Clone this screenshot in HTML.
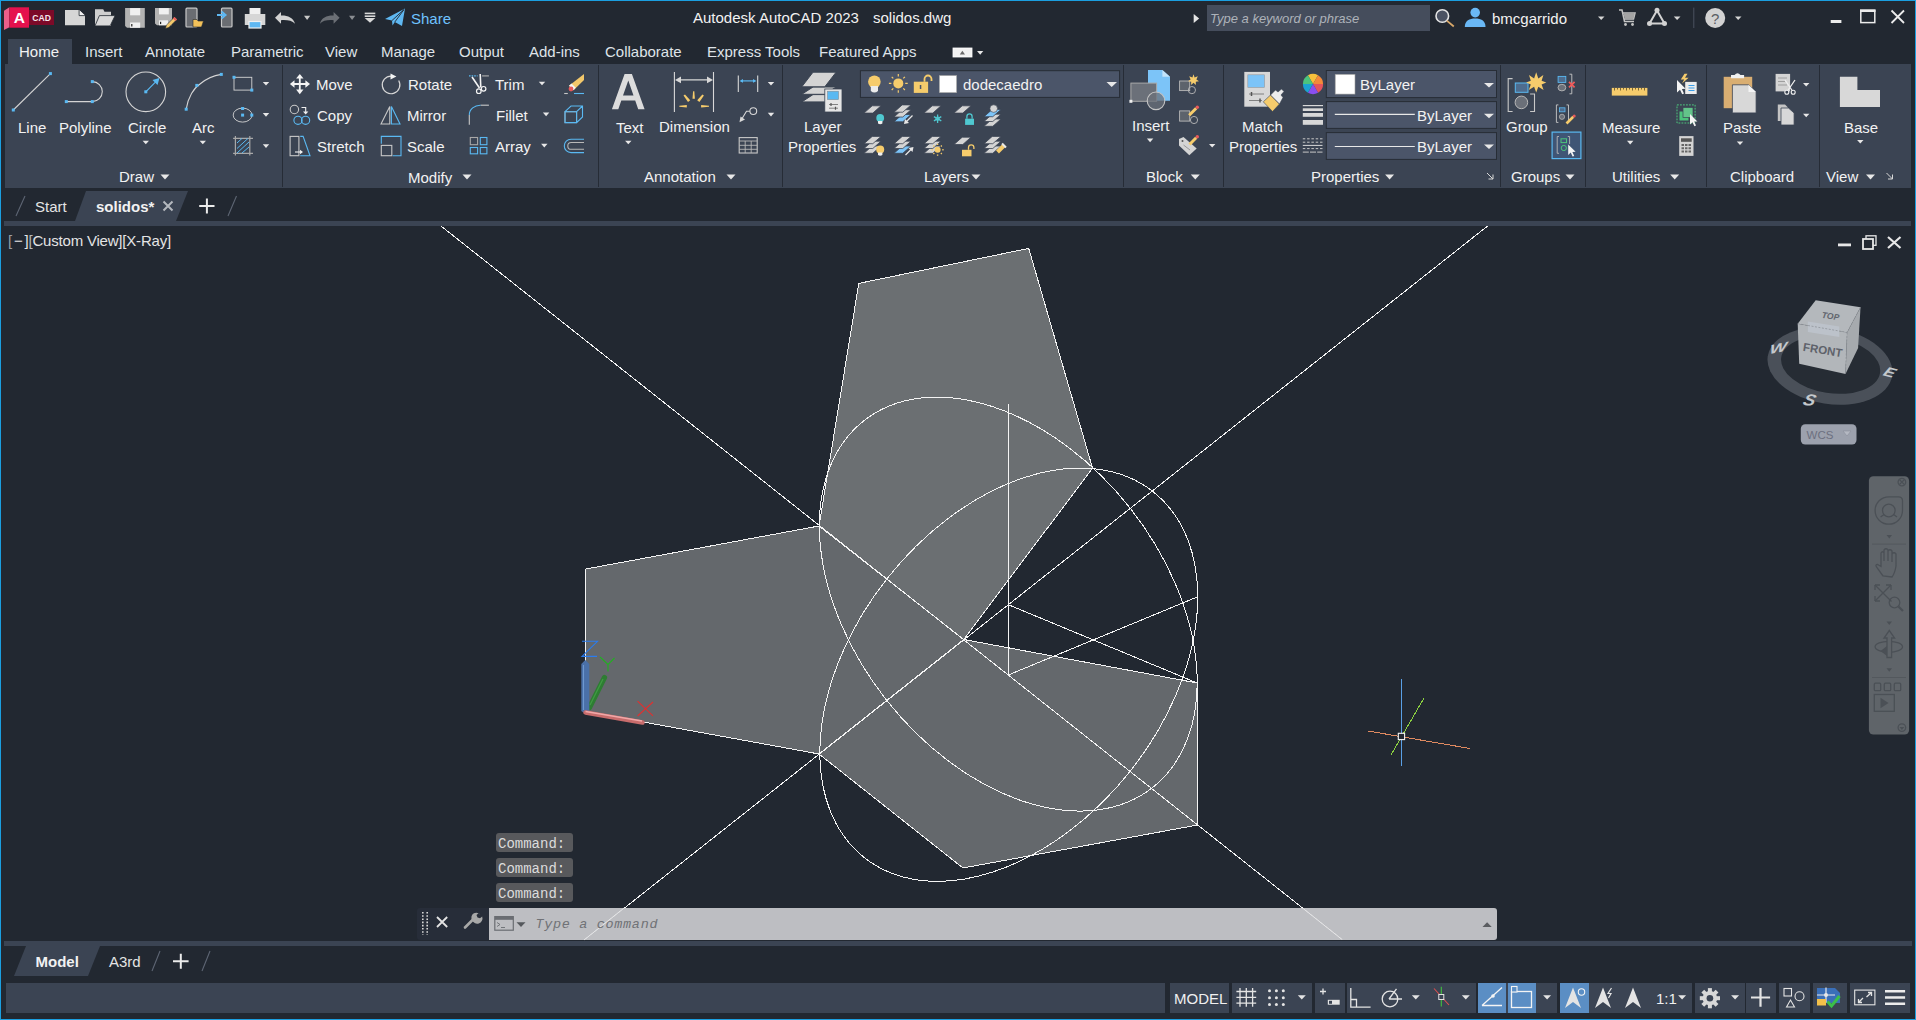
<!DOCTYPE html>
<html><head><meta charset="utf-8">
<style>
*{margin:0;padding:0;box-sizing:border-box}
html,body{width:1916px;height:1020px;overflow:hidden;background:#222831}
body{position:relative;font-family:"Liberation Sans",sans-serif;color:#f2f2f2}
.a{position:absolute}
.t{position:absolute;font-size:15px;line-height:15px;white-space:nowrap;color:#f2f2f2}
.p{position:absolute;background:#3b4453}
.sep{position:absolute;width:1px;background:#262c36;top:65px;height:122px}
.dd{position:absolute;width:0;height:0;border-left:4px solid transparent;border-right:4px solid transparent;border-top:5px solid #e6e6e6}
svg{position:absolute;overflow:visible}
</style></head><body>
<!-- window border -->
<div class="a" style="left:0;top:0;width:1916px;height:1020px;border:1px solid #1b9fe0;z-index:50;pointer-events:none"></div>

<!-- ============ TITLE BAR ============ -->
<div id="titlebar">
<svg width="1916" height="40" style="left:0;top:0">
<!-- logo -->
<polygon points="4,10.8 9.4,7.3 9.4,27.3 4,30" fill="#ec5f8a"/>
<rect x="9.4" y="7.3" width="19.6" height="20.4" fill="#e5114d"/>
<rect x="29" y="10" width="25" height="15" fill="#7c0a28"/>
<text x="19.3" y="23.2" font-family="Liberation Sans" font-weight="bold" font-size="15.5" fill="#fff" text-anchor="middle">A</text>
<text x="41.6" y="20.8" font-family="Liberation Sans" font-weight="bold" font-size="8.6" fill="#f4e8ec" text-anchor="middle">CAD</text>
<!-- new -->
<path d="M65,10 H79.1 L85,15.6 V25.3 H65 Z" fill="#d6d6d6"/>
<path d="M79.1,10 V15.6 H85 Z" fill="#f0f0f0"/>
<path d="M79.1,10 V15.6 H85" fill="none" stroke="#222831" stroke-width="0.8"/>
<!-- open -->
<path d="M95,9.3 H103.2 L104.5,11.8 H111 V25.9 H95 Z" fill="#cfcfcf"/>
<path d="M99.4,15.6 H115.1 L110.1,25.9 H95 Z" fill="#dadada" stroke="#222831" stroke-width="0.8"/>
<!-- save -->
<path d="M125.1,8.1 H144.8 V27.8 H127 L125.1,25.9 Z" fill="#b3b3b3"/>
<rect x="130.1" y="8.1" width="10.1" height="7.2" fill="#f0f0f0"/>
<rect x="130.1" y="22.5" width="10.1" height="5.3" fill="#f0f0f0"/>
<rect x="131.2" y="24" width="1.2" height="2.5" fill="#222"/>
<!-- save as -->
<path d="M155,8.1 H172 V25.3 H157 L155,23.5 Z" fill="#b3b3b3"/>
<rect x="159" y="8.1" width="9.8" height="6.3" fill="#f0f0f0"/>
<rect x="159" y="20.3" width="9" height="5" fill="#f0f0f0"/>
<rect x="160" y="21.8" width="1.2" height="2.3" fill="#222"/>
<path d="M174.5,17 L177,19.4 L168.8,27.6 L165.5,28.5 L166.3,25.2 Z" fill="#f3c86b" stroke="#222831" stroke-width="0.6"/>
<path d="M174.5,17 L177,19.4 L175.4,21 L172.9,18.6 Z" fill="#e85a5a"/>
<!-- open from mobile -->
<rect x="186" y="8.2" width="11" height="18.8" rx="1" fill="#6a6d72" stroke="#c8c8c8" stroke-width="1.2"/>
<path d="M193,19.5 H197 L198,21 H203.5 L201.5,27 H193 Z" fill="#f2c15a" stroke="#222831" stroke-width="0.6"/>
<!-- save to mobile -->
<rect x="221.5" y="8.2" width="10.5" height="18.8" rx="1" fill="#6a6d72" stroke="#c8c8c8" stroke-width="1.2"/>
<path d="M217,15 H225 M221.5,11.5 L225.5,15 L221.5,18.5" fill="none" stroke="#5fb8f2" stroke-width="2"/>
<!-- print -->
<rect x="249.5" y="8" width="11" height="6" fill="#f0f0f0"/>
<path d="M244.8,14 H265.3 V25 H244.8 Z" fill="#d6d6d6"/>
<rect x="249" y="21.5" width="12" height="6.5" fill="#5fb8f2" stroke="#f0f0f0" stroke-width="1.2"/>
<!-- undo -->
<path d="M275,17.8 L281,12 V15.6 C287,15.3 293.5,17.5 295,23.8 C292,20.5 287,19.8 281,20.2 V23.8 Z" fill="#d2d2d2"/>
<polygon points="304,15.8 310.2,15.8 307.1,20" fill="#c8c8c8"/>
<!-- redo -->
<path d="M339.6,17.8 L333.6,12 V15.6 C327.6,15.3 321.1,17.5 320,23.8 C322.6,20.5 327.6,19.8 333.6,20.2 V23.8 Z" fill="#6b6f75"/>
<polygon points="349,15.8 355.2,15.8 352.1,20" fill="#8a8d92"/>
<!-- customize -->
<rect x="364.7" y="12.6" width="10.6" height="1.6" fill="#d8d8d8"/>
<rect x="364.7" y="15.4" width="10.6" height="1.6" fill="#d8d8d8"/>
<polygon points="364.7,18 375.3,18 370,22.8" fill="#d8d8d8"/>
<!-- share -->
<path d="M385,19 L405,8.6 L402,26 L394.8,22 L392.5,25.5 L392,20.5 Z" fill="#5fb8f2"/>
<path d="M392,20.5 L404,9.5 M394.8,22 L404,9.5" stroke="#222831" stroke-width="0.9"/>
<!-- search -->
<polygon points="1193.7,14 1199.2,18.5 1193.7,23" fill="#e4e4e4"/>
<circle cx="1442.3" cy="16" r="6.3" fill="#4b5262" stroke="#e4e4e4" stroke-width="1.6"/>
<path d="M1446.8,20.6 L1453.8,26.5" stroke="#d9a86a" stroke-width="1.8"/>
<!-- user -->
<circle cx="1475.2" cy="12.6" r="4.8" fill="#6ab8f5"/>
<path d="M1464.8,27 C1464.8,20.5 1469.5,18.5 1475.2,18.5 C1481,18.5 1485.5,20.5 1485.5,27 Z" fill="#6ab8f5"/>
<polygon points="1598,16.5 1604.5,16.5 1601.2,20" fill="#d6d6d6"/>
<!-- cart -->
<path d="M1619,10 H1622 L1624.5,21.5 H1634 M1623,13 H1635 L1633.5,19 H1624" fill="none" stroke="#c4c4c4" stroke-width="1.5"/>
<path d="M1623.5,13.2 H1634.8 L1633.4,18.8 H1624.6 Z" fill="#a4a4a4"/>
<circle cx="1625.5" cy="24.5" r="1.4" fill="#c4c4c4"/><circle cx="1632.5" cy="24.5" r="1.4" fill="#c4c4c4"/>
<!-- A360 -->
<path d="M1657,10.5 L1649.5,23.5 H1664.5 Z" fill="none" stroke="#d2d2d2" stroke-width="2"/>
<circle cx="1657" cy="10.3" r="2.5" fill="#d2d2d2"/><circle cx="1649.5" cy="23.5" r="2.5" fill="#d2d2d2"/><circle cx="1664.5" cy="23.5" r="2.5" fill="#d2d2d2"/>
<polygon points="1673.8,16.5 1680.5,16.5 1677.1,20" fill="#d6d6d6"/>
<rect x="1693.3" y="7.6" width="1" height="20.4" fill="#4a5260"/>
<!-- help -->
<circle cx="1715.2" cy="18" r="10" fill="#d2d2d2"/>
<text x="1715.2" y="23.5" font-family="Liberation Sans" font-size="15" fill="#5a5e64" text-anchor="middle">?</text>
<polygon points="1735,16.5 1741.5,16.5 1738.2,20" fill="#d6d6d6"/>
<!-- window controls -->
<rect x="1830.7" y="20" width="10.7" height="3" fill="#ececec"/>
<rect x="1860.8" y="10.3" width="14" height="12.3" fill="none" stroke="#ececec" stroke-width="1.5"/>
<rect x="1860" y="9.5" width="15.5" height="2.5" fill="#ececec"/>
<path d="M1891.5,10.5 L1904,23 M1904,10.5 L1891.5,23" stroke="#ececec" stroke-width="1.8"/>
</svg>
<div class="t" style="left:693px;top:10px">Autodesk AutoCAD 2023</div>
<div class="t" style="left:873px;top:10px">solidos.dwg</div>
<div class="t" style="left:411px;top:11px;color:#6fc3ff">Share</div>
<div class="a" style="left:1207px;top:5px;width:223px;height:26px;background:#454d5c"></div>
<div class="t" style="left:1210px;top:11px;font-size:13px;font-style:italic;color:#aeb3ba">Type a keyword or phrase</div>
<div class="t" style="left:1492px;top:11px">bmcgarrido</div>
</div>

<!-- ============ RIBBON TABS ============ -->
<div class="p" style="left:8px;top:39px;width:64px;height:25px"></div>
<div class="t" style="left:19px;top:44px">Home</div>
<div class="t" style="left:85px;top:44px;color:#dfe3e8">Insert</div>
<div class="t" style="left:145px;top:44px;color:#dfe3e8">Annotate</div>
<div class="t" style="left:231px;top:44px;color:#dfe3e8">Parametric</div>
<div class="t" style="left:325px;top:44px;color:#dfe3e8">View</div>
<div class="t" style="left:381px;top:44px;color:#dfe3e8">Manage</div>
<div class="t" style="left:459px;top:44px;color:#dfe3e8">Output</div>
<div class="t" style="left:529px;top:44px;color:#dfe3e8">Add-ins</div>
<div class="t" style="left:605px;top:44px;color:#dfe3e8">Collaborate</div>
<div class="t" style="left:707px;top:44px;color:#dfe3e8">Express Tools</div>
<div class="t" style="left:819px;top:44px;color:#dfe3e8">Featured Apps</div>
<svg width="1000" height="64" style="left:0;top:0">
<rect x="953" y="48" width="19" height="9" fill="#f2f2f2" stroke="#ffffff" stroke-width="0.8"/>
<polygon points="959.8,54.5 965,54.5 962.4,50.8" fill="#6a6a6a"/>
<polygon points="977,51 983.3,51 980.2,54.7" fill="#e8e8e8"/>
</svg>

<!-- ============ RIBBON PANEL ============ -->
<div class="p" style="left:5px;top:64px;width:1906px;height:124px"></div>
<div id="ribbon">
<!-- separators -->
<div class="sep" style="left:282px"></div>
<div class="sep" style="left:598px"></div>
<div class="sep" style="left:782px"></div>
<div class="sep" style="left:1123px"></div>
<div class="sep" style="left:1223px"></div>
<div class="sep" style="left:1500px"></div>
<div class="sep" style="left:1585px"></div>
<div class="sep" style="left:1706px"></div>
<div class="sep" style="left:1819px"></div>
<svg width="1916" height="200" style="left:0;top:0">
<defs>
<g id="tri"><polygon points="-3.2,-1.8 3.2,-1.8 0,1.8" fill="#e8e8e8"/></g>
<g id="trib"><polygon points="-4.5,-2.5 4.5,-2.5 0,2.5" fill="#e8e8e8"/></g>
<rect id="bq" x="-1.5" y="-1.5" width="3" height="3" fill="#5ab9f2"/>
</defs>
<!-- ===== DRAW ===== -->
<g fill="none" stroke="#d4d4d4" stroke-width="1.1">
<line x1="13.3" y1="110" x2="50.4" y2="73.6"/>
<path d="M66.3,101.6 H92.3 A10,10 0 0 0 92.3,81.6"/>
<circle cx="145.8" cy="91.8" r="19.8"/>
<path d="M186.2,109.2 C188,97 194,88 200,84 C206,79 214,75.5 221.3,74.4"/>
<rect x="234" y="77.3" width="17.8" height="12.8" stroke-width="0.9"/>
<ellipse cx="242.6" cy="115.1" rx="9.4" ry="7" stroke-width="0.9"/>
<path d="M235.4,136.1 V155.5 M249.8,136.1 V155.5 M233.1,138.4 H253 M233.1,153.3 H253" stroke="#a8a8a8" stroke-width="1.2"/>
</g>
<path d="M145.8,91.8 L158.6,78.9" stroke="#5ab9f2" stroke-width="1.2"/>
<polygon points="159.5,78 152.5,80 157.5,85" fill="#5ab9f2"/>
<path d="M237,143 L242,138.4 M237,148.5 L248,138.4 M237,153 L249,142 M242,153 L249,147" stroke="#5ab9f2" stroke-width="1"/>
<use href="#bq" x="13.3" y="110"/><use href="#bq" x="50.4" y="73.6"/>
<use href="#bq" x="66.3" y="101.6"/><use href="#bq" x="92.3" y="101.6"/><use href="#bq" x="92.3" y="81.6"/>
<use href="#bq" x="145.8" y="91.8"/>
<use href="#bq" x="186.2" y="109.2"/><use href="#bq" x="196.8" y="85.4"/><use href="#bq" x="221.3" y="74.4"/>
<use href="#bq" x="234" y="77.3"/><use href="#bq" x="251.8" y="90.1"/>
<use href="#bq" x="242.6" y="108.5"/><use href="#bq" x="242.6" y="115.1"/><use href="#bq" x="251.8" y="115.1"/>
<use href="#tri" x="266" y="83.8"/><use href="#tri" x="266" y="114.9"/><use href="#tri" x="266" y="146.1"/>
<use href="#tri" x="145.8" y="142.5"/><use href="#tri" x="202.8" y="142.5"/>
<use href="#trib" x="165" y="177"/>
<!-- ===== MODIFY ===== -->
<g fill="#f4f4f4">
<path d="M291.5,84 H308.3 M299.8,75.5 V92.5" stroke="#f4f4f4" stroke-width="1.8"/>
<polygon points="289.9,84 294.5,80.3 294.5,87.7"/><polygon points="310,84 305.4,80.3 305.4,87.7"/>
<polygon points="299.8,73.9 296.1,78.5 303.5,78.5"/><polygon points="299.8,94.2 296.1,89.6 303.5,89.6"/>
</g>
<path d="M391.1,76.1 A8.8,8.8 0 1 0 398.7,80.5" fill="none" stroke="#d8d8d8" stroke-width="1.2"/>
<polygon points="390.5,73.4 396.4,76.4 390.5,79.4" fill="#f4f4f4"/>
<circle cx="294.4" cy="109.5" r="4.2" fill="none" stroke="#c8c8c8" stroke-width="1.1"/>
<path d="M301.5,107.5 H305.7 V112" fill="none" stroke="#f0f0f0" stroke-width="1.1"/>
<polygon points="303,111.5 308.4,111.5 305.7,114.6" fill="#f0f0f0"/>
<circle cx="298" cy="120.3" r="4.1" fill="none" stroke="#5ab9f2" stroke-width="1.1"/>
<circle cx="305.6" cy="120.3" r="4.1" fill="none" stroke="#5ab9f2" stroke-width="1.1"/>
<path d="M381,124 L389.8,106.4 V124 Z" fill="none" stroke="#c8c8c8" stroke-width="1.1"/>
<path d="M391.4,106.4 L400,124 H391.4 Z" fill="none" stroke="#5ab9f2" stroke-width="1.1"/>
<rect x="290.1" y="136.4" width="8.8" height="19.3" fill="none" stroke="#c8c8c8" stroke-width="1.1"/>
<path d="M300.2,136.4 H303.1 L310,155.7 H300.2" fill="none" stroke="#5ab9f2" stroke-width="1.1"/>
<path d="M295,152 H301.5" stroke="#f0f0f0" stroke-width="1.1"/><polygon points="303,152 300,149.8 300,154.2" fill="#f0f0f0"/>
<path d="M381.3,143.8 V136.4 H401 V155.7 H392.7" fill="none" stroke="#5ab9f2" stroke-width="1.1"/>
<rect x="381.3" y="145.4" width="10.5" height="10.3" fill="none" stroke="#c8c8c8" stroke-width="1.1"/>
<!-- trim -->
<path d="M469,75.9 H477.6" stroke="#5ab9f2" stroke-width="1.2" stroke-dasharray="1.6,1"/>
<path d="M482.1,75.9 H488.9" stroke="#a8a8a8" stroke-width="1.2"/>
<path d="M472,77 L479.5,88 M480.2,74 L480.8,87.5" stroke="#f4f4f4" stroke-width="1.6"/>
<circle cx="478.8" cy="91.2" r="2.3" fill="none" stroke="#f4f4f4" stroke-width="1.2"/>
<circle cx="483.6" cy="88.8" r="2.3" fill="none" stroke="#f4f4f4" stroke-width="1.2"/>
<use href="#tri" x="542" y="83.5"/>
<path d="M584,73.9 V80 L573.5,90.3 L569,85.8 Z" fill="#f3c86b"/>
<path d="M571.5,83.5 L575.8,87.8 L573.5,90.3 L569,85.8 Z" fill="#f4f4f4"/>
<circle cx="571" cy="89" r="2.4" fill="#e85a5a"/>
<path d="M564.2,93.5 H567.8" stroke="#c8c8c8" stroke-width="1.1"/><path d="M574,93.5 H584" stroke="#5ab9f2" stroke-width="1.1"/>
<!-- fillet -->
<path d="M469.3,114.9 V124.8" stroke="#c8c8c8" stroke-width="1.1"/>
<path d="M469.3,114.9 A11,9.7 0 0 1 480.7,105.2" fill="none" stroke="#5ab9f2" stroke-width="1.1"/>
<path d="M480.7,105.2 H488.9" stroke="#c8c8c8" stroke-width="1.1"/>
<use href="#tri" x="546.1" y="114.4"/>
<rect x="565" y="111.7" width="11.6" height="10.9" fill="none" stroke="#a8a8a8" stroke-width="1.1"/>
<path d="M565,111.7 L571,106 H582.5 V117 L576.6,122.6 H565 Z M576.6,111.7 L582.5,106 M565,111.7 H576.6 V122.6" fill="none" stroke="#5ab9f2" stroke-width="1.1"/>
<!-- array -->
<rect x="470.3" y="137.5" width="7.3" height="7.2" fill="none" stroke="#a8a8a8" stroke-width="1.1"/>
<rect x="480.3" y="137.5" width="6.6" height="7.2" fill="none" stroke="#5ab9f2" stroke-width="1.1"/>
<rect x="470.3" y="147.5" width="7.3" height="6.3" fill="none" stroke="#5ab9f2" stroke-width="1.1"/>
<rect x="480.3" y="147.5" width="6.6" height="6.3" fill="none" stroke="#5ab9f2" stroke-width="1.1"/>
<use href="#tri" x="544.3" y="145.6"/>
<path d="M584,139.2 H571 A6.7,6.7 0 0 0 571,152.6 H584" fill="none" stroke="#5ab9f2" stroke-width="1.1"/>
<path d="M584,142.5 H571.2 A3.4,3.4 0 0 0 571.2,149.3 H584" fill="none" stroke="#b8b8b8" stroke-width="1.1"/>
<use href="#trib" x="467" y="177"/>
<!-- ===== ANNOTATION ===== -->
<path d="M611.9,109.3 L624.6,73.9 H631.9 L644.6,109.3 H638.2 L635.2,100.6 H621.3 L618.3,109.3 Z M623,95.5 H633.5 L628.3,80.5 Z" fill="#dcdcdc" fill-rule="evenodd"/>
<use href="#tri" x="628.3" y="142.5"/>
<path d="M674.4,72 V112.1 M713.5,72 V112.1 M677,79.9 H711" stroke="#d8d8d8" stroke-width="1.1"/>
<polygon points="675,79.9 681,76.6 681,83.2" fill="#d8d8d8"/><polygon points="713,79.9 707,76.6 707,83.2" fill="#d8d8d8"/>
<g fill="#f6cc6c">
<polygon points="692.5,98.8 694.9,98.8 694.3,91.2 693.1,91.2"/>
<polygon points="688,102 690.2,100.2 685,94.5 683.5,95.5"/>
<polygon points="699.4,102 697.2,100.2 702.4,94.5 703.9,95.5"/>
<polygon points="686.8,105 686.8,107.6 679.3,106.8 679.3,105.8"/>
<polygon points="701.1,105 701.1,107.6 709,106.8 709,105.8"/>
</g>
<path d="M738.3,75.4 V92 M757.7,75.4 V92" stroke="#d8d8d8" stroke-width="1.1"/>
<path d="M741,80.9 H755" stroke="#5ab9f2" stroke-width="1.2"/>
<polygon points="739.5,80.9 743,79 743,82.8" fill="#5ab9f2"/><polygon points="756.5,80.9 753,79 753,82.8" fill="#5ab9f2"/>
<use href="#tri" x="771" y="83.8"/>
<circle cx="753.3" cy="111.1" r="3.4" fill="none" stroke="#d8d8d8" stroke-width="1.1"/>
<path d="M749.9,111.3 H746.5 L741.5,119.5" fill="none" stroke="#d8d8d8" stroke-width="1.1"/>
<polygon points="739.5,122.2 740.5,116.5 745,119.5" fill="#d8d8d8"/>
<use href="#tri" x="771" y="114.6"/>
<rect x="739.2" y="137.6" width="18" height="15.4" fill="none" stroke="#c8c8c8" stroke-width="1.1"/>
<path d="M739.2,141 H757.2 M739.2,145.3 H757.2 M739.2,149.3 H757.2 M745.2,141 V153 M751.2,141 V153" stroke="#b8b8b8" stroke-width="0.9"/>
<use href="#trib" x="731" y="177"/>
<!-- ===== LAYERS ===== -->
<g fill="#d4d4d4" stroke="#3b4453" stroke-width="1">
<path d="M801.8,101.9 L813,94.6 H836.1 L824.8,101.9 Z"/>
<path d="M801.8,94.3 L813,87 H836.1 L824.8,94.3 Z"/>
<path d="M801.8,86.8 L813,72.2 H836.1 L824.8,86.8 Z"/>
</g>
<rect x="824.8" y="89" width="17.2" height="23" fill="#e6e6e6" stroke="#3b4453" stroke-width="0.8"/>
<rect x="827.4" y="91.2" width="11.2" height="8.5" fill="#5ab9f2" stroke="#888" stroke-width="0.5"/>
<path d="M829,104.5 H838 M829,108.2 H838" stroke="#777" stroke-width="0.9"/>
<path d="M831,103 V106 M835.5,106.7 V109.7" stroke="#555" stroke-width="1.2"/>
<rect x="860.4" y="70.7" width="259.2" height="26.7" fill="#4b5569" stroke="#272d36" stroke-width="1"/>
<circle cx="874.4" cy="81.7" r="6.3" fill="#f6cc6c"/>
<path d="M870.8,86 H878 V91 Q874.4,94 870.8,91 Z" fill="#ececec"/>
<circle cx="898.3" cy="83.4" r="5" fill="#f6cc6c"/>
<path d="M898.3,74 V76.5 M898.3,90.3 V92.8 M888.9,83.4 H891.4 M905.2,83.4 H907.7 M891.7,76.8 L893.3,78.4 M903.3,88.4 L904.9,90 M904.9,76.8 L903.3,78.4 M893.3,88.4 L891.7,90" stroke="#f6cc6c" stroke-width="1.2"/>
<rect x="913.8" y="81.7" width="14.3" height="11.2" fill="#f6cc6c"/>
<rect x="919.8" y="85" width="1.5" height="4" fill="#4b5569"/>
<path d="M924.5,81.7 V79 A3.5,3.5 0 0 1 931.5,79 V81" fill="none" stroke="#f6cc6c" stroke-width="1.8"/>
<rect x="939.3" y="75.5" width="17.4" height="17.2" fill="#ffffff" stroke="#9a9a9a" stroke-width="0.6"/>
<polygon points="1106.5,82 1117,82 1111.7,87" fill="#e8e8e8"/>
<defs>
<path id="para" d="M0,7.3 L8.2,0 H17 L8.8,7.3 Z"/>
<g id="stk"><use href="#para" y="9.6" fill="#d4d4d4"/><use href="#para" y="4.8"/><use href="#para" y="0"/></g>
</defs>
<g stroke="#3b4453" stroke-width="0.8" fill="#d4d4d4">
<!-- row1 -->
<use href="#para" x="864" y="105.8"/>
<use href="#para" x="894" y="114.5" fill="#7cc4f8"/><use href="#para" x="894" y="109.7"/><use href="#para" x="894" y="104.9"/>
<use href="#para" x="924" y="105.8"/>
<use href="#para" x="954" y="105.8"/>
<use href="#para" x="984" y="119"/><use href="#para" x="984" y="114.2"/><use href="#para" x="984" y="109.4" fill="#7cc4f8"/>
<!-- row2 -->
<use href="#para" x="864" y="146"/><use href="#para" x="864" y="141.2"/><use href="#para" x="864" y="136.4"/>
<use href="#para" x="894" y="146" fill="#7cc4f8"/><use href="#para" x="894" y="141.2"/><use href="#para" x="894" y="136.4"/>
<use href="#para" x="924" y="146"/><use href="#para" x="924" y="141.2"/><use href="#para" x="924" y="136.4"/>
<use href="#para" x="954" y="137.2"/>
<use href="#para" x="984" y="146"/><use href="#para" x="984" y="141.2"/><use href="#para" x="984" y="136.4"/>
</g>
<circle cx="880.2" cy="118" r="3.9" fill="#4fc8d0"/><path d="M878,121 H882.4 V123.5 Q880.2,125 878,123.5 Z" fill="#eee"/>
<path d="M912.5,115.5 L905.5,122.5" stroke="#e8e8e8" stroke-width="1.2"/><polygon points="904,124 905,119 909,123" fill="#e8e8e8"/>
<path d="M937.6,114.5 V123 M933.9,116.6 L941.3,120.9 M941.3,116.6 L933.9,120.9" stroke="#4fc8d0" stroke-width="1.3"/>
<circle cx="937.6" cy="118.7" r="1.8" fill="none" stroke="#4fc8d0" stroke-width="0.8"/>
<rect x="965.1" y="118.7" width="8.9" height="6.2" fill="#4fc8d0"/>
<path d="M966.9,118.7 V116.5 A2.6,2.6 0 0 1 972.1,116.5 V118.7" fill="none" stroke="#4fc8d0" stroke-width="1.3"/>
<circle cx="993.7" cy="108.6" r="3.8" fill="#d4d4d4" stroke="#3b4453" stroke-width="0.6"/>
<circle cx="880.2" cy="149.5" r="4" fill="#f6cc6c"/><path d="M878,152.5 H882.4 V155 Q880.2,156.5 878,155 Z" fill="#eee"/>
<path d="M905.5,155 L912,148.5" stroke="#e8e8e8" stroke-width="1.2"/><polygon points="913.5,147 912.5,152 908.5,148" fill="#e8e8e8"/>
<circle cx="937.6" cy="149.7" r="3" fill="#f6cc6c"/>
<path d="M937.6,143.7 V145 M937.6,154.4 V155.7 M931.6,149.7 H932.9 M942.3,149.7 H943.6 M933.4,145.5 L934.3,146.4 M940.9,153 L941.8,153.9 M941.8,145.5 L940.9,146.4 M934.3,153 L933.4,153.9" stroke="#f6cc6c" stroke-width="1.4"/>
<rect x="962" y="149.8" width="9.5" height="6.5" fill="#f6cc6c"/>
<path d="M968.5,149.8 V147.5 A2.7,2.7 0 0 1 973.9,147.5 V149" fill="none" stroke="#f6cc6c" stroke-width="1.3"/>
<path d="M997.5,152 L1004.5,145" stroke="#f6cc6c" stroke-width="4"/>
<path d="M1002,143.5 L1006,147.5" stroke="#e8e8e8" stroke-width="2"/>
<use href="#trib" x="976" y="177"/>
<!-- ===== BLOCK ===== -->
<path d="M1148,70.1 H1162.4 L1170,76.7 V100.8 H1148 Z" fill="#7cc4f8"/>
<path d="M1162.4,70.1 V76.7 H1170 Z" fill="#c4e4fb"/>
<rect x="1130.9" y="83.1" width="25.7" height="18.2" fill="#6b7079" stroke="#a8a8a8" stroke-width="1"/>
<circle cx="1156" cy="100.8" r="8.8" fill="rgba(107,112,121,0.75)" stroke="#c4c4c4" stroke-width="1.1"/>
<rect x="1129.4" y="99.8" width="3" height="3" fill="#eee"/>
<use href="#tri" x="1150.1" y="140.4"/>
<rect x="1179.6" y="81" width="10.1" height="9.6" fill="#5d636c" stroke="#b8b8b8" stroke-width="0.9"/>
<circle cx="1191.9" cy="90.1" r="3.6" fill="none" stroke="#b8b8b8" stroke-width="0.9"/>
<path d="M1193.5,74.2 L1194.6,77.4 L1197.8,76.3 L1196.4,79.4 L1199,81.2 L1195.8,81.8 L1195.9,85 L1193.5,82.8 L1191.1,85 L1191.2,81.8 L1188,81.2 L1190.6,79.4 L1189.2,76.3 L1192.4,77.4 Z" fill="#f6cc6c"/>
<rect x="1179.6" y="110.9" width="10.1" height="10.2" fill="#5d636c" stroke="#b8b8b8" stroke-width="0.9"/>
<circle cx="1194" cy="120" r="3.6" fill="none" stroke="#b8b8b8" stroke-width="0.9"/>
<path d="M1189.2,115.2 L1196.2,108.2" stroke="#f6cc6c" stroke-width="3"/><circle cx="1197.3" cy="107.3" r="1.7" fill="#e85a5a"/>
<path d="M1179,139 L1183.5,137 L1196.7,148.4 L1189.3,155.3 L1179,145.5 Z" fill="#d4d4d4"/>
<circle cx="1182.5" cy="141" r="1" fill="#555"/>
<path d="M1183.5,145 L1190,150" stroke="#888" stroke-width="0.8"/>
<path d="M1189.5,144.5 L1196.2,137.8" stroke="#f6cc6c" stroke-width="3"/><circle cx="1197.3" cy="136.8" r="1.7" fill="#e85a5a"/>
<use href="#tri" x="1212.2" y="145.7"/>
<use href="#trib" x="1195.3" y="177"/>
<!-- ===== PROPERTIES ===== -->
<rect x="1244.3" y="71.9" width="25.7" height="34.8" fill="#d8d8d8"/>
<rect x="1247.8" y="74.8" width="16.8" height="12.6" fill="#7cc4f8" stroke="#999" stroke-width="0.6"/>
<path d="M1249,94 H1264 M1249,100.5 H1262" stroke="#777" stroke-width="0.9"/>
<path d="M1251.5,92 V96 M1260,98.5 V102.5" stroke="#555" stroke-width="1.5"/>
<path d="M1263.3,101.8 L1270.5,95 L1279.5,104 L1272.5,111.5 Z" fill="#f6cc6c" stroke="#3b4453" stroke-width="0.6"/>
<path d="M1270.5,95 L1275.5,90 L1278,92 L1281.5,89 L1284,91.5 L1281,95 L1283,97.5 L1279.5,104 Z" fill="#ececec" stroke="#3b4453" stroke-width="0.6"/>
<g transform="translate(1313,84)">
<path d="M0,0 L-5.05,-8.75 A10.1,10.1 0 0 1 5.05,-8.75 Z" fill="#f7c03c"/>
<path d="M0,0 L5.05,-8.75 A10.1,10.1 0 0 1 10.1,0 Z" fill="#f5893a"/>
<path d="M0,0 L10.1,0 A10.1,10.1 0 0 1 5.05,8.75 Z" fill="#e5545c"/>
<path d="M0,0 L5.05,8.75 A10.1,10.1 0 0 1 -5.05,8.75 Z" fill="#8a4ff0"/>
<path d="M0,0 L-5.05,8.75 A10.1,10.1 0 0 1 -10.1,0 Z" fill="#1ba3d0"/>
<path d="M0,0 L-10.1,0 A10.1,10.1 0 0 1 -5.05,-8.75 Z" fill="#4cc47c"/>
</g>
<rect x="1302.8" y="105" width="20.2" height="1.2" fill="#d8d8d8"/>
<rect x="1302.8" y="108.3" width="20.2" height="2.7" fill="#d8d8d8"/>
<rect x="1302.8" y="113" width="20.2" height="3.8" fill="#d8d8d8"/>
<rect x="1302.8" y="120" width="20.2" height="4.8" fill="#d8d8d8"/>
<path d="M1302.8,138.8 H1322.5 M1302.8,142.2 H1322.5 M1302.8,148.6 H1322.5" stroke="#c8c8c8" stroke-width="1" stroke-dasharray="2.5,1.8"/>
<path d="M1302.8,145.4 H1322.5" stroke="#d8d8d8" stroke-width="1"/>
<path d="M1302.8,152.1 H1322.5" stroke="#c8c8c8" stroke-width="1" stroke-dasharray="6,1.2"/>
<rect x="1326.3" y="70.5" width="170.2" height="27.1" fill="#4b5569" stroke="#272d36" stroke-width="1"/>
<rect x="1326.3" y="101.6" width="170.2" height="26.8" fill="#4b5569" stroke="#272d36" stroke-width="1"/>
<rect x="1326.3" y="132.6" width="170.2" height="26.8" fill="#4b5569" stroke="#272d36" stroke-width="1"/>
<rect x="1335.2" y="74.3" width="19.8" height="19.8" fill="#ffffff" stroke="#9a9a9a" stroke-width="0.6"/>
<path d="M1334.8,114.4 H1414.8 M1334.8,146.5 H1414.8" stroke="#e8e8e8" stroke-width="1.1"/>
<polygon points="1484,83 1494,83 1489,87.5" fill="#e8e8e8"/>
<polygon points="1484,113.7 1494,113.7 1489,118.2" fill="#e8e8e8"/>
<polygon points="1484,144.5 1494,144.5 1489,149" fill="#e8e8e8"/>
<use href="#trib" x="1389.6" y="177"/>
<path d="M1487,173 L1493,179 M1493,174.5 V179 H1488.5" fill="none" stroke="#d8d8d8" stroke-width="1"/>
<!-- ===== GROUPS ===== -->
<path d="M1512.6,78.6 H1508.2 V111.5 H1512.6 M1530.1,94 H1534.5 V111.5 H1530.1" fill="none" stroke="#c8c8c8" stroke-width="1.1"/>
<rect x="1515.3" y="83" width="12.7" height="9.3" fill="#4e6c8e" stroke="#5ab9f2" stroke-width="1"/>
<circle cx="1521.4" cy="102.4" r="6.3" fill="#6b7079" stroke="#b8b8b8" stroke-width="1"/>
<path d="M1536.2,72.2 L1538.3,78.5 L1543.4,74.9 L1541.6,80.8 L1546.3,82.4 L1541.6,84.6 L1543.6,90 L1538.3,86.8 L1536.2,92.6 L1534.1,86.8 L1528.8,90 L1530.8,84.6 L1526.1,82.4 L1530.8,80.8 L1529,74.9 L1534.1,78.5 Z" fill="#f6cc6c"/>
<rect x="1558.1" y="76.4" width="7.7" height="6" fill="#4e6c8e" stroke="#5ab9f2" stroke-width="0.9"/>
<ellipse cx="1561.9" cy="87.6" rx="3.9" ry="3.3" fill="#6b7079" stroke="#b8b8b8" stroke-width="0.9"/>
<path d="M1569.5,74.2 H1571.8 V93.8 H1569.5" fill="none" stroke="#c8c8c8" stroke-width="0.9"/>
<path d="M1569,81.8 L1574.6,87.4 M1574.6,81.8 L1569,87.4" stroke="#f05a5a" stroke-width="1.8"/>
<path d="M1558.4,104.9 H1556.4 V122.4 H1558.4 M1566.5,104.9 H1568.5 V122.4 H1566.5" fill="none" stroke="#c8c8c8" stroke-width="0.9"/>
<rect x="1559.5" y="107.8" width="5.5" height="4" fill="#4e6c8e" stroke="#5ab9f2" stroke-width="0.8"/>
<circle cx="1562" cy="116.8" r="2.6" fill="#6b7079" stroke="#b8b8b8" stroke-width="0.8"/>
<path d="M1566.5,123.5 L1573.3,116.8" stroke="#f6cc6c" stroke-width="2.6"/><circle cx="1574.2" cy="115.9" r="1.5" fill="#e85a5a"/>
<rect x="1552.1" y="132.1" width="28.8" height="26.5" fill="#3f5575" stroke="#5ab9f2" stroke-width="1.2"/>
<path d="M1559,136.5 H1557.2 V153.3 H1559 M1567.8,136.5 H1569.6 V144" fill="none" stroke="#b8b8b8" stroke-width="0.9"/>
<rect x="1561" y="138.8" width="5.5" height="3.8" fill="none" stroke="#4cc47c" stroke-width="1"/>
<circle cx="1563.8" cy="148" r="2.6" fill="none" stroke="#4cc47c" stroke-width="1"/>
<path d="M1568.2,144.5 V155 L1570.7,152.6 L1572.6,156.6 L1574.2,155.9 L1572.4,152 L1575.6,151.8 Z" fill="#f4f4f4"/>
<use href="#trib" x="1570" y="177"/>
<!-- ===== UTILITIES ===== -->
<rect x="1611.8" y="87.9" width="35.6" height="7.7" fill="#f6cc6c"/>
<path d="M1614.5,87.9 V90.5 M1617.5,87.9 V89.5 M1620.5,87.9 V90.5 M1623.5,87.9 V89.5 M1626.5,87.9 V90.5 M1629.5,87.9 V89.5 M1632.5,87.9 V90.5 M1635.5,87.9 V89.5 M1638.5,87.9 V90.5 M1641.5,87.9 V89.5 M1644.5,87.9 V90.5" stroke="#6b5a30" stroke-width="0.9"/>
<use href="#tri" x="1630.2" y="142.6"/>
<rect x="1685.2" y="81.9" width="11.5" height="12.1" fill="#ececec"/>
<path d="M1688.5,85.5 H1694.5 M1688.5,88 H1694.5 M1688.5,90.5 H1694.5" stroke="#3a9ee8" stroke-width="1"/>
<path d="M1677,80 V92.5 L1680,89.8 L1682.2,94.3 L1684,93.4 L1681.9,89 L1685.6,88.8 Z" fill="#f4f4f4"/>
<path d="M1684.5,73.8 L1680.8,79.5 H1684.2 L1682,83.5 L1688.6,77.8 H1685 L1687.5,73.8 Z" fill="#f6cc6c"/>
<rect x="1677" y="104.9" width="18.1" height="18.1" fill="none" stroke="#4cc47c" stroke-width="1" stroke-dasharray="1.8,1.2"/>
<rect x="1679.5" y="111.5" width="9" height="9" fill="#4cc47c"/>
<rect x="1683" y="107.5" width="10" height="10" fill="#63c48a" stroke="#3b4453" stroke-width="0.7"/>
<path d="M1690,114 V124.5 L1692.5,122.2 L1694.4,126.2 L1696,125.5 L1694.2,121.6 L1697.4,121.4 Z" fill="#f4f4f4"/>
<rect x="1679.2" y="136.1" width="14.3" height="19.8" fill="#d4d4d4"/>
<rect x="1681" y="138.3" width="10.7" height="3.5" fill="#555"/>
<path d="M1681.5,145 H1691 M1681.5,148.3 H1691 M1681.5,151.6 H1691" stroke="#666" stroke-width="2" stroke-dasharray="2.5,1"/>
<use href="#trib" x="1674.7" y="177"/>
<!-- ===== CLIPBOARD ===== -->
<rect x="1723.7" y="76.8" width="28.5" height="31.4" fill="#d9ae72"/>
<path d="M1731,78.3 V75 H1734.5 Q1737.5,71.5 1740.5,75 H1744.1 V78.3 Z" fill="#f0f0f0"/>
<path d="M1732.4,84.8 H1748.5 L1756.1,92 V112.9 H1732.4 Z" fill="#d8d8d8" stroke="#3b4453" stroke-width="0.8"/>
<path d="M1748.5,84.8 V92 H1756.1 Z" fill="#f4f4f4"/>
<use href="#tri" x="1740" y="143.3"/>
<rect x="1775.6" y="73.9" width="14.5" height="17.5" fill="#d4d4d4"/>
<path d="M1778,78 H1787 M1778,81.5 H1785 M1778,85 H1787" stroke="#999" stroke-width="0.9"/>
<path d="M1785,80 L1792.5,91 M1795,80 L1787.5,91" stroke="#f0f0f0" stroke-width="1.3"/>
<circle cx="1786.8" cy="92.3" r="2" fill="#3b4453" stroke="#f0f0f0" stroke-width="1.1"/>
<circle cx="1793.2" cy="92.3" r="2" fill="#3b4453" stroke="#f0f0f0" stroke-width="1.1"/>
<use href="#tri" x="1806.2" y="84.8"/>
<path d="M1777.8,104.6 H1785 L1788,107.5 V121 H1777.8 Z" fill="#c4c4c4"/>
<path d="M1781,108 H1788.5 L1794.1,113 V125 H1781 Z" fill="#d8d8d8" stroke="#3b4453" stroke-width="0.8"/>
<use href="#tri" x="1806.2" y="115.5"/>
<!-- ===== VIEW ===== -->
<path d="M1839.9,76.8 H1857.4 V90 H1880 V107 H1839.9 Z" fill="#d8d8d8"/>
<use href="#tri" x="1860.3" y="141.8"/>
<use href="#trib" x="1870.5" y="177"/>
<path d="M1886.5,173 L1892.5,179 M1892.5,174.5 V179 H1888" fill="none" stroke="#d8d8d8" stroke-width="1"/>
<use href="#trib" x="1739" y="177" opacity="0"/>
</svg>
<div class="t" style="left:18px;top:120px">Line</div>
<div class="t" style="left:59px;top:120px">Polyline</div>
<div class="t" style="left:128px;top:120px">Circle</div>
<div class="t" style="left:192px;top:120px">Arc</div>
<div class="t" style="left:119px;top:169px">Draw</div>
<div class="t" style="left:316px;top:77px">Move</div>
<div class="t" style="left:408px;top:77px">Rotate</div>
<div class="t" style="left:495px;top:77px">Trim</div>
<div class="t" style="left:317px;top:108px">Copy</div>
<div class="t" style="left:407px;top:108px">Mirror</div>
<div class="t" style="left:496px;top:108px">Fillet</div>
<div class="t" style="left:317px;top:139px">Stretch</div>
<div class="t" style="left:407px;top:139px">Scale</div>
<div class="t" style="left:495px;top:139px">Array</div>
<div class="t" style="left:408px;top:170px">Modify</div>
<div class="t" style="left:616px;top:120px">Text</div>
<div class="t" style="left:659px;top:119px">Dimension</div>
<div class="t" style="left:644px;top:169px">Annotation</div>
<div class="t" style="left:804px;top:119px">Layer</div>
<div class="t" style="left:788px;top:139px">Properties</div>
<div class="t" style="left:963px;top:77px">dodecaedro</div>
<div class="t" style="left:924px;top:169px">Layers</div>
<div class="t" style="left:1132px;top:118px">Insert</div>
<div class="t" style="left:1146px;top:169px">Block</div>
<div class="t" style="left:1242px;top:119px">Match</div>
<div class="t" style="left:1229px;top:139px">Properties</div>
<div class="t" style="left:1311px;top:169px">Properties</div>
<div class="t" style="left:1360px;top:77px">ByLayer</div>
<div class="t" style="left:1417px;top:108px">ByLayer</div>
<div class="t" style="left:1417px;top:139px">ByLayer</div>
<div class="t" style="left:1506px;top:119px">Group</div>
<div class="t" style="left:1511px;top:169px">Groups</div>
<div class="t" style="left:1602px;top:120px">Measure</div>
<div class="t" style="left:1612px;top:169px">Utilities</div>
<div class="t" style="left:1723px;top:120px">Paste</div>
<div class="t" style="left:1730px;top:169px">Clipboard</div>
<div class="t" style="left:1844px;top:120px">Base</div>
<div class="t" style="left:1826px;top:169px">View</div>
</div>

<!-- ============ DOC TABS ============ -->
<div class="p" style="left:4px;top:221px;width:1907px;height:5px"></div>
<div id="doctabs">
<svg width="300" height="230" style="left:0;top:0">
<polygon points="75,221 86,191 188,191 176,221" fill="#3b4453"/>
<path d="M25,196 L16,216 M236.5,196 L228,216" stroke="#5d6573" stroke-width="1.1"/>
<path d="M163.5,201.5 L172.5,210.5 M172.5,201.5 L163.5,210.5" stroke="#b4b8be" stroke-width="2"/>
<path d="M199.2,206 H214.5 M206.9,198.6 V213.5" stroke="#ececec" stroke-width="2"/>
</svg>
<div class="t" style="left:35px;top:199px;color:#e4e4e4">Start</div>
<div class="t" style="left:96px;top:199px;font-weight:bold">solidos*</div>
</div>

<!-- ============ VIEWPORT ============ -->
<div id="viewport">
<svg width="1916" height="1020" style="left:0;top:0" viewBox="0 0 1916 1020">
<defs><clipPath id="vc"><rect x="1" y="226" width="1914" height="714"/></clipPath></defs>
<g clip-path="url(#vc)">
<polygon points="819,526 858.8,283.4 1028.7,248.4 1092.5,468.1 963.8,639.5" fill="#6b6f72"/>
<polygon points="585.3,569.1 819,526 963.8,639.5 819,754 585.3,711.4" fill="#64686c"/>
<polygon points="963.8,639.5 1197.2,683 1197.2,825.1 963,868 819,754" fill="#64686c"/>
<g fill="none" stroke="#f4f4f4" stroke-width="1" shape-rendering="crispEdges">
<polygon points="819,526 858.8,283.4 1028.7,248.4 1092.5,468.1 963.8,639.5"/>
<polygon points="585.3,569.1 819,526 963.8,639.5 819,754 585.3,711.4"/>
<polygon points="963.8,639.5 1197.2,683 1197.2,825.1 963,868 819,754"/>
<line x1="441" y1="226" x2="1343" y2="940"/>
<line x1="1487.6" y1="226" x2="584" y2="940"/>
<line x1="1008.3" y1="404" x2="1008.3" y2="675"/>
<line x1="1008.3" y1="604.7" x2="1197.2" y2="683"/>
<line x1="1008.3" y1="675" x2="1197.2" y2="597"/>
<ellipse cx="1008.3" cy="604.1" rx="233.4" ry="155.1" transform="rotate(51.8 1008.3 604.1)"/>
<ellipse cx="1008.8" cy="674.7" rx="233.1" ry="155.1" transform="rotate(-51.7 1008.8 674.7)"/>
</g>
</g>
<!-- UCS icon -->
<path d="M589.5,707.5 L604.5,677.5" stroke="#2e7d32" stroke-width="5.2" stroke-linecap="round"/>
<path d="M590,705 L603,679" stroke="#4caf50" stroke-width="1.2" opacity="0.6"/>
<path d="M581.3,664 L585.3,660 L589.3,664 V711 Q585.3,715 581.3,711 Z" fill="#4a70a8"/>
<path d="M583.5,665 V710" stroke="#6d98d0" stroke-width="1.1"/>
<path d="M585.5,712.5 L642.5,722.5" stroke="#c86c6c" stroke-width="4.5" stroke-linecap="round"/>
<path d="M585.5,711.5 L642,721" stroke="#f0a8a8" stroke-width="1.3"/>
<path d="M582,641.3 H597.5 L582,656.4 H597" fill="none" stroke="#2a7cf0" stroke-width="1.1"/>
<path d="M600,657 L608,664.5 L614.5,658 M608,664.5 V671.5" fill="none" stroke="#22b022" stroke-width="1.1"/>
<path d="M637.6,701.2 L653,715.9 M653,702 L637.6,716" stroke="#e03030" stroke-width="1.1"/>
<!-- crosshair cursor -->
<g shape-rendering="crispEdges"><path d="M1401.4,678.8 V766" stroke="#5aa0e6" stroke-width="1"/>
<path d="M1391,755 L1424,698" stroke="#8bd040" stroke-width="1"/>
<path d="M1368,731 L1470,748.5" stroke="#e08a60" stroke-width="1"/></g>
<rect x="1398.3" y="733.3" width="6.3" height="6.3" fill="#222831" stroke="#f4f4f4" stroke-width="1.1"/>
<!-- viewport window controls -->
<rect x="1838" y="243.5" width="13" height="2.8" fill="#e8e8e8"/>
<rect x="1866" y="235.8" width="10" height="9.5" fill="none" stroke="#e8e8e8" stroke-width="1.3"/>
<rect x="1863" y="239" width="10" height="10" fill="#222831" stroke="#e8e8e8" stroke-width="1.8"/>
<path d="M1888,237 L1900.5,248 M1900.5,237 L1888,248" stroke="#e8e8e8" stroke-width="2.2"/>
<!-- viewcube compass -->
<g transform="rotate(9 1830 366)">
<ellipse cx="1830" cy="366" rx="63" ry="38" fill="#4a5059"/>
<ellipse cx="1830.5" cy="365" rx="50" ry="28" fill="#262c34"/>
</g>
<g font-family="Liberation Sans" font-weight="bold" font-style="italic" fill="#c4c8cc">
<text x="0" y="0" font-size="13" text-anchor="middle" transform="translate(1778,352.5) rotate(-12) skewX(-18) scale(1.45,0.95)">W</text>
<text x="0" y="0" font-size="13" text-anchor="middle" transform="translate(1887.5,376.5) rotate(14) skewX(-15) scale(1.25,1.05)">E</text>
<text x="0" y="0" font-size="15" text-anchor="middle" transform="translate(1808,405.5) rotate(4) skewX(-14) scale(1.2,1.08)">S</text>
</g>
<polygon points="1797.7,323.7 1815.7,300.2 1860.5,307.3 1847.1,332.4" fill="#b4b8bc"/>
<polygon points="1797.7,323.7 1847.1,332.4 1845.5,374 1799.2,363.8" fill="#b2b6ba"/>
<polygon points="1847.1,332.4 1860.5,307.3 1858.1,348 1845.5,374" fill="#a6aaae"/>
<polygon points="1807.9,321.4 1839.3,326.5 1839.3,337.1 1807.9,332" fill="#bcc2ca"/>
<path d="M1797.7,323.7 L1847.1,332.4 L1860.5,307.3 M1847.1,332.4 L1845.5,374" fill="none" stroke="#8a8e94" stroke-width="0.7" stroke-dasharray="2,1.5"/>
<text x="1830.6" y="319" font-family="Liberation Sans" font-weight="bold" font-style="italic" font-size="8.5" fill="#62666e" text-anchor="middle" transform="rotate(8 1830.6 316)">TOP</text>
<text x="1822.8" y="354" font-family="Liberation Sans" font-weight="bold" font-size="11.5" fill="#5e626a" text-anchor="middle" transform="rotate(9 1822.8 350)">FRONT</text>
<rect x="1800.8" y="424.2" width="55.7" height="20.4" rx="4.5" fill="#9ca1ad"/>
<text x="1820" y="439" font-family="Liberation Sans" font-size="11.5" fill="#6c7080" text-anchor="middle">WCS</text>
<polygon points="1843,431 1851,431 1847,436" fill="#b4b8c2" stroke="#8a8e9a" stroke-width="0.6"/>
<!-- navbar -->
<rect x="1868.9" y="476.2" width="40.2" height="258.3" rx="4.5" fill="#5f6469"/>
<g fill="none" stroke="#4b5056" stroke-width="1.3">
<circle cx="1901.9" cy="482.1" r="3.8"/>
<path d="M1899.6,479.8 L1904.2,484.4 M1904.2,479.8 L1899.6,484.4"/>
<path d="M1888.8,496.8 H1898.5 Q1902.5,496.8 1902.5,500.8 V510.5 A13.7,13.7 0 1 1 1888.8,496.8 Z"/>
<circle cx="1888.8" cy="510.5" r="6.3"/>
<path d="M1880.6,517 L1884,514.5 M1897,517 L1893.6,514.5"/>
<line x1="1872" y1="544.1" x2="1906" y2="544.1" stroke-width="0.6"/>
<path d="M1883,576 L1876.5,567 Q1875,564.5 1877.5,564.5 L1881,566.5 V553 Q1882.5,550.5 1884,553 V561 V550 Q1886,547.5 1888,550 V561 V551 Q1890,548.5 1892,551 V562 V554 Q1894,551.5 1896,554 V566 Q1895,573 1892,577 Z"/>
<path d="M1875,585 L1891.5,601.5 M1891,585 L1875,601"/>
<path d="M1875,585 H1880 M1875,585 V590 M1891,585 H1886 M1891,585 V590 M1875,601 V596 M1875,601 H1880"/>
<circle cx="1894.5" cy="602.5" r="5.3"/>
<path d="M1898.5,606.5 L1903,611" stroke-width="2.2"/>
<ellipse cx="1888.8" cy="646.8" rx="13.7" ry="5.5"/>
<path d="M1887,657.5 V638 H1884 L1889.3,630.5 L1894.6,638 H1891.6 V657.5 Z" fill="#5f6469"/>
<line x1="1872" y1="677.5" x2="1906" y2="677.5" stroke-width="0.6"/>
<rect x="1874.3" y="683.2" width="6.4" height="7.5" rx="1"/><rect x="1884.3" y="683.2" width="6.4" height="7.5" rx="1"/><rect x="1894.3" y="683.2" width="6.4" height="7.5" rx="1"/>
<rect x="1874.3" y="694.5" width="20" height="16.8"/>
<circle cx="1901.9" cy="727.6" r="3.8"/>
</g>
<polygon points="1880.5,651 1887,646 1887,656" fill="#4b5056"/>
<polygon points="1880.5,697.8 1888.5,703 1880.5,708.2" fill="#4b5056"/>
<polygon points="1886.5,535 1892,535 1889.3,538.5" fill="#4b5056"/>
<polygon points="1886.5,621.5 1892,621.5 1889.3,625" fill="#4b5056"/>
<polygon points="1886.5,668.3 1892,668.3 1889.3,671.8" fill="#4b5056"/>
<polygon points="1899.5,727 1904.3,727 1901.9,730" fill="#4b5056"/>
</svg>
</div>
<div class="t" style="left:8px;top:233px;color:#e4e4e4;letter-spacing:-0.2px"><span style="color:#9a9ea4">[</span><span style="padding:0 2px">−</span>]<span style="color:#b4b8bc">[</span>Custom View][X-Ray]</div>
<!-- command history -->
<div class="a" style="left:496px;top:833px;width:77px;height:19px;background:#58595c;border-radius:3px"></div>
<div class="a" style="left:496px;top:858px;width:77px;height:19px;background:#58595c;border-radius:3px"></div>
<div class="a" style="left:496px;top:883px;width:77px;height:19px;background:#58595c;border-radius:3px"></div>
<div class="t" style="left:498px;top:837px;font-family:'Liberation Mono',monospace;font-size:14px;line-height:14px;color:#dcdcdc">Command:</div>
<div class="t" style="left:498px;top:862px;font-family:'Liberation Mono',monospace;font-size:14px;line-height:14px;color:#dcdcdc">Command:</div>
<div class="t" style="left:498px;top:887px;font-family:'Liberation Mono',monospace;font-size:14px;line-height:14px;color:#dcdcdc">Command:</div>
<!-- command line -->
<div class="a" style="left:417px;top:908px;width:73px;height:32px;background:#272d39;border-radius:3px 0 0 3px"></div>
<div class="a" style="left:489px;top:908px;width:1008px;height:32px;background:rgba(196,197,200,0.96);border-radius:0 3px 3px 0"></div>
<svg width="1916" height="1020" style="left:0;top:0">
<path d="M1342,939.5 L1300,906" stroke="rgba(255,255,255,0.55)" stroke-width="1"/>
<path d="M584,940 L624,908" stroke="rgba(255,255,255,0.55)" stroke-width="1"/>
<path d="M422.8,912 V935 M427.2,912 V935" stroke="#d8d8d8" stroke-width="1.6" stroke-dasharray="1.6,1.6"/>
<path d="M437,917 L447.2,927 M447.2,917 L437,927" stroke="#e4e4e4" stroke-width="1.8"/>
<path d="M465,927.5 L474.5,918" stroke="#a8a8a8" stroke-width="2.6" stroke-linecap="round"/>
<path d="M472,920 A4.8,4.8 0 1 1 480.5,915.2 L478.5,913.2 L476.5,915 L477.5,917.5 L480,918.3 L482.2,916.6 A4.8,4.8 0 0 1 472,920 Z" fill="#a8a8a8"/>
<rect x="494.8" y="916.6" width="18.5" height="13.6" fill="none" stroke="#6a6d72" stroke-width="1.2"/>
<rect x="494.8" y="916.6" width="18.5" height="3.2" fill="#6a6d72"/>
<path d="M497,922.5 L500,924.5 L497,926.5 M501,927.5 H505" fill="none" stroke="#6a6d72" stroke-width="0.9"/>
<polygon points="516.5,922.3 525.5,922.3 521,927" fill="#55585c"/>
<polygon points="1482.5,927.1 1491.7,927.1 1487.1,922.3" fill="#5a5c60"/>
</svg>
<div class="t" style="left:535.5px;top:918px;font-family:'Liberation Mono',monospace;font-style:italic;font-size:13.5px;line-height:14px;letter-spacing:0.66px;color:#707276">Type a command</div>

<!-- ============ LAYOUT TABS / STATUS ============ -->
<div class="p" style="left:4px;top:941px;width:1908px;height:5px"></div>
<div id="layout">
<svg width="300" height="1020" style="left:0;top:0">
<polygon points="26,946 100,946 88,976 14,976" fill="#3b4453"/>
<path d="M160,951 L152,971 M210,951 L202,971" stroke="#5d6573" stroke-width="1.1"/>
<path d="M173,961.2 H188.6 M180.8,953.7 V968.7" stroke="#ececec" stroke-width="2"/>
</svg>
<div class="t" style="left:35.5px;top:954px;font-weight:bold">Model</div>
<div class="t" style="left:109px;top:954px;color:#e4e4e4">A3rd</div>
</div>
<div class="p" style="left:6px;top:983px;width:1159px;height:30px"></div>
<div id="status">
<div class="p" style="left:1170px;top:983px;width:59px;height:30px"></div>
<div class="p" style="left:1232px;top:983px;width:80px;height:30px"></div>
<div class="p" style="left:1315px;top:983px;width:30px;height:30px"></div>
<div class="p" style="left:1346.5px;top:983px;width:129px;height:30px"></div>
<div class="p" style="left:1478px;top:983px;width:79px;height:30px"></div>
<div class="a" style="left:1478px;top:983px;width:28px;height:30px;background:#5b8ec4"></div>
<div class="a" style="left:1508px;top:983px;width:28px;height:30px;background:#5b8ec4"></div>
<div class="p" style="left:1560px;top:983px;width:132px;height:30px"></div>
<div class="a" style="left:1560px;top:983px;width:29px;height:30px;background:#5b8ec4"></div>
<div class="p" style="left:1695px;top:983px;width:49.5px;height:30px"></div>
<div class="p" style="left:1746px;top:983px;width:30px;height:30px"></div>
<div class="p" style="left:1779px;top:983px;width:30.5px;height:30px"></div>
<div class="p" style="left:1813px;top:983px;width:33.7px;height:30px"></div>
<div class="p" style="left:1850px;top:983px;width:60px;height:30px"></div>
<div class="t" style="left:1174px;top:991px;color:#f0f0f0">MODEL</div>
<div class="t" style="left:1656px;top:991px;color:#f0f0f0">1:1</div>
<svg width="1916" height="1020" style="left:0;top:0">
<g stroke="#e4e4e4" stroke-width="1.3" fill="none">
<path d="M1236.4,991.5 H1256.2 M1236.4,997.3 H1256.2 M1236.4,1003.1 H1256.2 M1240,987.9 V1006.7 M1246.3,987.9 V1006.7 M1252.6,987.9 V1006.7"/>
<path d="M1350.8,987.9 V1007.2 H1370.6 M1350.8,999.5 H1356.5 V1007.2"/>
<circle cx="1390" cy="999" r="7.8"/>
<path d="M1389,999 L1396.5,988.8 M1389,999 H1402"/>
<path d="M1321,997.7 H1335 M1328,990.8 V1004.6" stroke-width="0" />
<path d="M1320,991.5 H1326 M1323,988.5 V994.5"/>
</g>
<g fill="#e4e4e4">
<circle cx="1269.5" cy="990.8" r="1.5"/><circle cx="1276.4" cy="990.8" r="1.5"/><circle cx="1283.3" cy="990.8" r="1.5"/>
<circle cx="1269.5" cy="997.7" r="1.5"/><circle cx="1276.4" cy="997.7" r="1.5"/><circle cx="1283.3" cy="997.7" r="1.5"/>
<circle cx="1269.5" cy="1004.6" r="1.5"/><circle cx="1276.4" cy="1004.6" r="1.5"/><circle cx="1283.3" cy="1004.6" r="1.5"/>
</g>
<rect x="1327.5" y="999.5" width="12.5" height="5.5" fill="#e4e4e4" stroke="#3b4453" stroke-width="0.6"/>
<rect x="1329" y="1000.8" width="3" height="3" fill="#3b4453"/>
<polygon points="1297.8,995.2 1305.8,995.2 1301.8,999.5" fill="#e4e4e4"/>
<polygon points="1411.8,995.2 1419.8,995.2 1415.8,999.5" fill="#e4e4e4"/>
<polygon points="1461.8,995.2 1469.8,995.2 1465.8,999.5" fill="#e4e4e4"/>
<polygon points="1543.1,995.2 1551.1,995.2 1547.1,999.5" fill="#e4e4e4"/>
<polygon points="1678.1,995.2 1686.1,995.2 1682.1,999.5" fill="#e4e4e4"/>
<polygon points="1731.1,995.2 1739.1,995.2 1735.1,999.5" fill="#e4e4e4"/>
<path d="M1434,988.5 L1449,1005" stroke="#e05050" stroke-width="1.1"/>
<path d="M1441.3,986.8 V1006.5" stroke="#40c040" stroke-width="1.1"/>
<rect x="1438.8" y="994.5" width="5" height="5" fill="#3b4453" stroke="#e4e4e4" stroke-width="1"/>
<path d="M1482,1005.5 H1502 M1482,1005.5 L1502,987.5" stroke="#f4f4f4" stroke-width="1.3"/>
<circle cx="1493" cy="996" r="1.8" fill="#f4f4f4"/>
<rect x="1511.5" y="991.5" width="20" height="16" fill="none" stroke="#f4f4f4" stroke-width="1.3"/>
<rect x="1511.5" y="986.5" width="5.5" height="5.5" fill="#5b8ec4" stroke="#f4f4f4" stroke-width="1.1"/>
<g fill="#e4e4e4">
<path d="M1565,1008 L1573,987.5 L1581,1008 L1573,1002 Z"/>
<path d="M1595,1008 L1603,987.5 L1611,1008 L1603,1002 Z"/>
<path d="M1625,1008 L1633,987.5 L1641,1008 L1633,1002 Z"/>
</g>
<circle cx="1581.5" cy="992" r="3.2" fill="none" stroke="#f4f4f4" stroke-width="1.1"/>
<path d="M1611.5,988 L1608,993.5 H1611 L1608.5,998" stroke="#e4e4e4" stroke-width="1.2" fill="none"/>
<g transform="translate(1709.9,998.2)">
<circle r="7.3" fill="#d8d8d8"/>
<g fill="#d8d8d8"><rect x="-2" y="-10.1" width="4" height="20.2"/><rect x="-2" y="-10.1" width="4" height="20.2" transform="rotate(45)"/><rect x="-2" y="-10.1" width="4" height="20.2" transform="rotate(90)"/><rect x="-2" y="-10.1" width="4" height="20.2" transform="rotate(135)"/></g>
<circle r="3.3" fill="#3b4453"/>
</g>
<path d="M1751,997.5 H1770.1 M1760.5,988.1 V1006.8" stroke="#e4e4e4" stroke-width="2.2"/>
<rect x="1784" y="988.5" width="7.5" height="7.5" fill="none" stroke="#e4e4e4" stroke-width="1.1"/>
<circle cx="1799.5" cy="996.3" r="4.5" fill="none" stroke="#e4e4e4" stroke-width="1.1"/>
<path d="M1786.5,1007 L1790.5,1000 L1794.5,1007 Z" fill="none" stroke="#e4e4e4" stroke-width="1.1"/>
<path d="M1817,988 H1835 L1840,993 V1003 H1817 Z" fill="#3a6fb8"/>
<path d="M1826,987.5 V1003 M1817,995 H1835" stroke="#e8e8e8" stroke-width="1.2"/>
<circle cx="1826" cy="995" r="2" fill="#e8e8e8"/>
<rect x="1817" y="999" width="9" height="6.5" fill="#f3c04a"/>
<path d="M1827.5,1001.5 L1831.5,1006 L1839.5,996" fill="none" stroke="#3bbf4a" stroke-width="3"/>
<rect x="1854.7" y="990.1" width="20.2" height="14.7" fill="none" stroke="#e4e4e4" stroke-width="1.1"/>
<path d="M1866.5,997 L1871.5,992.5 M1868,992.5 H1871.5 V996 M1863,998 L1858.5,1002.5 M1858.5,999 V1002.5 H1862" fill="none" stroke="#e4e4e4" stroke-width="1.3"/>
<path d="M1885,991.3 H1905.1 M1885,997.5 H1905.1 M1885,1003.7 H1905.1" stroke="#ececec" stroke-width="2.4"/>
</svg>
</div>

</body></html>
